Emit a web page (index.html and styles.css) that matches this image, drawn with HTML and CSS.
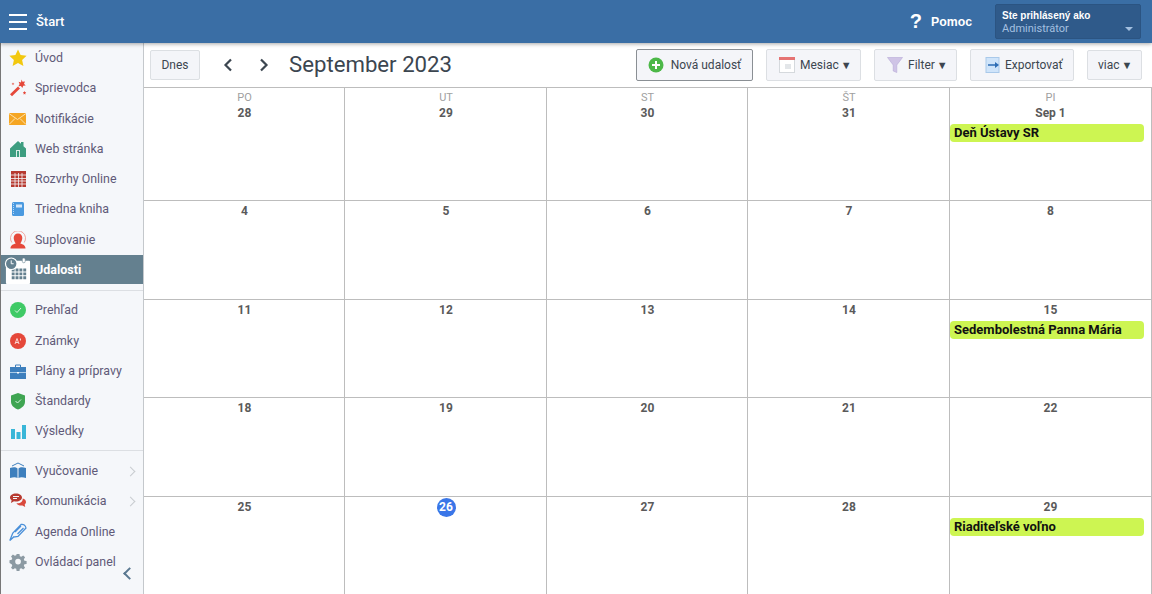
FILE: index.html
```html
<!DOCTYPE html>
<html lang="sk">
<head>
  <meta charset="UTF-8" />
  <title>Udalosti</title>
  <link rel="stylesheet" href="styles.css">
</head>
<body>

  <!-- Horny pruh -->
  <header class="topbar">
    <div class="hamburger"><span></span><span></span><span></span></div>
    <div class="top-title">Štart</div>
    <div class="help"><span class="help-mark">?</span><span>Pomoc</span></div>
    <div class="user-box">
      <div class="user-label">Ste prihlásený ako</div>
      <div class="user-name">Administrátor</div>
      <span class="user-arrow"></span>
    </div>
  </header>

  <div class="page">
    <!-- Bocne menu -->
    <nav class="sidebar">
      <a class="item"><svg viewBox="0 0 18 18"><path fill="#f2c80f" d="M9 .5l2.600 5.600 6 .7-4.500 4.100 1.300 6L9 13.900 3.600 16.900l1.300-6L.4 6.800l6-.7z"/></svg><span>Úvod</span></a>
      <a class="item"><svg viewBox="0 0 18 18"><path fill="#e5483a" d="M1 15.200L9 7.500l2 2-8 7.800zM12.500 .5l1 2.300 2.500-.4-1 2.300 1.700 1.800-2.500.2-.8 2.400-1.500-2-2.500.2 1.200-2.200-1-2.300 2.400.6zM15.500 12l.5 1.100 1.200.3-.9.9.2 1.200-1-.6-1 .6.2-1.200-.9-.9 1.200-.3zM4 3.500l.5 1 1 .4-1 .4-.5 1-.5-1-1-.4 1-.4z"/></svg><span>Sprievodca</span></a>
      <a class="item"><svg viewBox="0 0 18 18"><rect y="3" width="17" height="12" fill="#f5a623"/><path fill="none" stroke="#fde2ae" d="M0 3.500l8.500 6 8.500-6M0 14.500l6-6M17 14.500l-6-6"/></svg><span>Notifikácie</span></a>
      <a class="item"><svg viewBox="0 0 18 18"><path fill="#3d9d80" d="M1 8.500L9 1l3 2.800V2h2.500v4.200L17 8.500v8.500H1z"/><rect x="7" y="10" width="4" height="7" fill="#dcefe8"/><rect x="8" y="11" width="2" height="6" fill="#3d9d80"/></svg><span>Web stránka</span></a>
      <a class="item"><svg viewBox="0 0 18 18"><rect x="2" y="1" width="15" height="16" fill="#b73a30"/><path stroke="#f5f7fa" stroke-width=".8" d="M2 5h15M2 8.500h15M2 11h15M2 14h15M6 3v14M9.500 3v14M13 3v14"/></svg><span>Rozvrhy Online</span></a>
      <a class="item"><svg viewBox="0 0 18 18"><rect x="3" y="2" width="12" height="14" rx="1.500" fill="#4a9ae0"/><path stroke="#d5e8fa" stroke-width=".8" stroke-dasharray="1 1" d="M4.500 3v12"/><rect x="7" y="4.500" width="6" height="3" fill="#d5e8fa"/></svg><span>Triedna kniha</span></a>
      <a class="item"><svg viewBox="0 0 18 18"><path fill="none" stroke="#ee8f86" stroke-width=".8" d="M2.800 11.500a7.500 7.500 0 1 1 12.400 0"/><path fill="#e5483a" d="M9 2.500c2.700 0 4.300 2 4.300 4.500S11.700 12 11.300 12.500c2.500 1 5.200 1.500 5.200 5H1.500c0-3.500 2.700-4 5.200-5C6.300 12 4.700 9.500 4.700 7S6.300 2.500 9 2.500z"/></svg><span>Suplovanie</span></a>
      <a class="item item-active">
        <svg class="icon-big" viewBox="0 0 28 28">
          <rect x="2" y="4" width="25" height="24" rx="1" fill="#fff"/>
          <rect x="19" y="1" width="3" height="5" rx="1.500" fill="#fff" stroke="#64808f" stroke-width=".6"/>
          <path fill="#64808f" d="M8 12h3v3H8zM12 12h3v3h-3zM16 12h3v3h-3zM20 12h3v3h-3zM8 16h3v3H8zM12 16h3v3h-3zM16 16h3v3h-3zM20 16h3v3h-3zM8 20h3v3H8zM12 20h3v3h-3zM16 20h3v3h-3zM20 20h3v3h-3z"/>
          <circle cx="7.500" cy="7" r="6" fill="#64808f" stroke="#fff" stroke-width="1.200"/>
          <path fill="none" stroke="#fff" d="M7.500 3.500V7h2.500"/>
        </svg>
        <span>Udalosti</span>
      </a>
      <div class="divider divider-a"></div>
      <a class="item"><svg viewBox="0 0 18 18"><circle cx="9" cy="9" r="8" fill="#3fca66"/><path fill="none" stroke="#d8f5e0" d="M6 9.500l2 2 4-4.500"/></svg><span>Prehľad</span></a>
      <a class="item"><svg viewBox="0 0 18 18"><circle cx="9" cy="9" r="8" fill="#e5483a"/><path fill="none" stroke="#fbd5d1" d="M6 12l2-5.500 2 5.500M7 10.500h2M11.500 6.500v2"/></svg><span>Známky</span></a>
      <a class="item"><svg viewBox="0 0 18 18"><path fill="#3d7fbd" d="M1 5h16v12H1z"/><path fill="none" stroke="#3d7fbd" d="M6.500 5V3h5v2"/><path stroke="#a9cbe8" d="M1 10.500h16"/><rect x="8" y="10" width="2" height="1.500" fill="#fff"/></svg><span>Plány a prípravy</span></a>
      <a class="item"><svg viewBox="0 0 18 18"><path fill="#3fa552" d="M9 1l7 2.500v6c0 4-3 6.500-7 8-4-1.500-7-4-7-8v-6z"/><path fill="none" stroke="#d8f5e0" d="M6.500 9l2 2 3.500-3.500"/></svg><span>Štandardy</span></a>
      <a class="item"><svg viewBox="0 0 18 18"><path fill="#38b6d8" d="M2 7h4v10H2zM7.500 10h4v7h-4zM13 3h4v14h-4z"/></svg><span>Výsledky</span></a>
      <div class="divider divider-b"></div>
      <a class="item"><svg viewBox="0 0 18 18"><path fill="#3d7fbd" d="M1 6c3-1 6-1 7.500.5V16C7 15 4 15 1 16zM17 6c-3-1-6-1-7.500.5V16c1.500-1 4.500-1 7.500 0z"/><path fill="none" stroke="#3d7fbd" d="M3 4l6-3 6 3"/></svg><span>Vyučovanie</span><i class="chevron"></i></a>
      <a class="item"><svg viewBox="0 0 18 18"><path fill="#b73a30" d="M7 1.500c3.500 0 6 1.700 6 4s-2.500 4-6 4c-.7 0-1.300 0-2-.2L2 11l.6-2.800C1.500 7.500 1 6.500 1 5.500c0-2.300 2.500-4 6-4z"/><path fill="#d9493c" d="M13.700 6.500c2 .5 3.300 1.800 3.300 3.500 0 1-.5 1.800-1.300 2.400l.5 2.600-2.800-1.500c-2.500.4-5-.5-6-2.300 4 .5 6.500-1.700 6.300-4.700z"/><path stroke="#f5f7fa" d="M4 4.500h6M4 6.500h4"/></svg><span>Komunikácia</span><i class="chevron"></i></a>
      <a class="item"><svg viewBox="0 0 18 18"><path fill="none" stroke="#4a90d9" stroke-width="1.300" d="M.8 17.500l3-7.500L12 1.500c2.500-.5 4.500.8 5 3.500l-8 8.500-4.500.5zM6 9l6-6M8.500 11l6-6M.8 17.500l4.500-4"/></svg><span>Agenda Online</span></a>
      <a class="item"><svg viewBox="0 0 18 18"><path fill="#8c9aa3" fill-rule="evenodd" d="M7.500 1h3l.4 2.300 1.500.6 2-1.300 2 2-1.300 2 .6 1.500 2.300.4v3l-2.300.4-.6 1.500 1.300 2-2 2-2-1.300-1.500.6-.4 2.300h-3l-.4-2.300-1.500-.6-2 1.300-2-2 1.300-2-.6-1.500L0 10.500v-3l2.300-.4.6-1.500-1.300-2 2-2 2 1.300 1.500-.6zM9 6a3 3 0 100 6 3 3 0 000-6z" transform="translate(.5 0) scale(.95)"/></svg><span>Ovládací panel</span></a>
      <div class="collapse"><i></i></div>
    </nav>

    <!-- Kalendar -->
    <main class="main">
      <div class="toolbar">
        <button class="btn btn-today">Dnes</button>
        <div class="arrows">
          <svg viewBox="0 0 12 14"><path fill="none" stroke="#3c4650" stroke-width="2.200" d="M9 1.500L3.500 7 9 12.500"/></svg>
          <svg viewBox="0 0 12 14"><path fill="none" stroke="#3c4650" stroke-width="2.200" d="M3 1.500L8.500 7 3 12.500"/></svg>
        </div>
        <h1>September 2023</h1>
        <div class="tools">
          <button class="btn btn-new">
            <svg viewBox="0 0 16 16"><circle cx="8" cy="8" r="7.500" fill="#4cb848"/><path stroke="#fff" stroke-width="2" d="M8 4v8M4 8h8"/></svg>
            Nová udalosť
          </button>
          <button class="btn btn-month">
            <svg viewBox="0 0 16 16"><rect x=".5" y=".5" width="15" height="15" fill="#fff" stroke="#d5d9dd"/><rect width="16" height="3" fill="#e57373"/><path fill="#e3e6e9" d="M6 7h6v5H6z"/></svg>
            <span>Mesiac <span class="caret">▼</span></span>
          </button>
          <button class="btn btn-filter">
            <svg viewBox="0 0 16 16"><path fill="#cfc4e6" stroke="#b7a9d6" stroke-width=".6" d="M.5 .5h15L9.800 8v7.500L6.200 14V8z"/></svg>
            <span>Filter <span class="caret">▼</span></span>
          </button>
          <button class="btn btn-export">
            <svg viewBox="0 0 16 16"><rect x="1" y=".5" width="13" height="15" fill="#cfe4fa" stroke="#a9c9ea"/><path stroke="#2d6db5" stroke-width="1.500" d="M3 8h9"/><path fill="#2d6db5" d="M10 5l4 3-4 3z"/></svg>
            Exportovať
          </button>
          <button class="btn btn-more"><span>viac <span class="caret">▼</span></span></button>
        </div>
      </div>

      <div class="calendar">
        <div class="cell first"><div class="dow">PO</div><div class="num">28</div></div>
        <div class="cell first"><div class="dow">UT</div><div class="num">29</div></div>
        <div class="cell first"><div class="dow">ST</div><div class="num">30</div></div>
        <div class="cell first"><div class="dow">ŠT</div><div class="num">31</div></div>
        <div class="cell first"><div class="dow">PI</div><div class="num">Sep 1</div><div class="event">Deň Ústavy SR</div></div>

        <div class="cell"><div class="num">4</div></div>
        <div class="cell"><div class="num">5</div></div>
        <div class="cell"><div class="num">6</div></div>
        <div class="cell"><div class="num">7</div></div>
        <div class="cell"><div class="num">8</div></div>

        <div class="cell"><div class="num">11</div></div>
        <div class="cell"><div class="num">12</div></div>
        <div class="cell"><div class="num">13</div></div>
        <div class="cell"><div class="num">14</div></div>
        <div class="cell"><div class="num">15</div><div class="event">Sedembolestná Panna Mária</div></div>

        <div class="cell"><div class="num">18</div></div>
        <div class="cell"><div class="num">19</div></div>
        <div class="cell"><div class="num">20</div></div>
        <div class="cell"><div class="num">21</div></div>
        <div class="cell"><div class="num">22</div></div>

        <div class="cell"><div class="num">25</div></div>
        <div class="cell"><div class="num"><span class="today">26</span></div></div>
        <div class="cell"><div class="num">27</div></div>
        <div class="cell"><div class="num">28</div></div>
        <div class="cell"><div class="num">29</div><div class="event">Riaditeľské voľno</div></div>
      </div>
    </main>
  </div>

</body>
</html>
```

FILE: styles.css
```css
/* Zaklad */
* { box-sizing: border-box; margin: 0; padding: 0; }
html, body { height: 100%; overflow: hidden; }
body {
  font-family: Roboto, "Liberation Sans", sans-serif;
  font-size: 12px;
  color: #3c4650;
  background: #fff;
}

/* Horny pruh */
.topbar {
  position: relative;
  z-index: 2;
  display: flex;
  align-items: center;
  height: 43px;
  background: #3a6ea5;
  color: #fff;
  box-shadow: 0 1px 4px rgba(0,0,0,0.35);
}
.hamburger {
  display: flex;
  flex-direction: column;
  gap: 5px;
  width: 18px;
  margin-left: 9px;
}
.hamburger span {
  height: 2px;
  background: #fff;
}
.top-title {
  margin-left: 9px;
  font-size: 13px;
  font-weight: 500;
}
.help {
  display: flex;
  align-items: center;
  gap: 9px;
  margin-left: auto;
  font-family: "Liberation Sans", sans-serif;
  font-size: 12.300px;
  font-weight: 700;
}
.help-mark {
  font-size: 20px;
  font-weight: 700;
}
.user-box {
  position: relative;
  width: 146px;
  height: 35px;
  margin: 0 11px 0 23px;
  padding: 4px 6px;
  background: #2f5a8a;
  border: 1px solid #2b5482;
  border-radius: 2px;
}
.user-label {
  font-family: "Liberation Sans", sans-serif;
  font-size: 10px;
  font-weight: 700;
  line-height: 13px;
}
.user-name {
  font-size: 11px;
  line-height: 14px;
  color: #a4c0e0;
}
.user-arrow {
  position: absolute;
  right: 7px;
  bottom: 7px;
  border-left: 4px solid transparent;
  border-right: 4px solid transparent;
  border-top: 4px solid #a4c0e0;
}

.page {
  display: flex;
  height: 551px;
}

/* Bocne menu */
.sidebar {
  position: relative;
  flex: 0 0 144px;
  background: #f5f7fa;
  border-left: 1px solid #777;
  border-right: 1px solid #c4c8cc;
}
.item {
  display: flex;
  align-items: center;
  height: 30.250px;
  padding-left: 8px;
  color: #5f5a78;
  font-size: 12.400px;
  line-height: 14px;
}
.item svg {
  flex: 0 0 18px;
  width: 18px;
  height: 18px;
  margin-right: 8px;
}
.item-active {
  height: 29px;
  padding: 2px 0 0 3px;
  background: #64808f;
  color: #fff;
  font-weight: 700;
  font-size: 12.500px;
}
.item-active svg.icon-big {
  flex: 0 0 27px;
  width: 27px;
  height: 27px;
  margin-right: 4px;
}
.divider {
  border-top: 1px solid #dcdfe3;
}
.divider-a { margin: 6px 0 4.500px; }
.divider-b { margin: 3.500px 0 5px; }
.chevron {
  width: 7px;
  height: 7px;
  margin-left: auto;
  margin-right: 9px;
  border-top: 1px solid #c8ccd0;
  border-right: 1px solid #c8ccd0;
  transform: rotate(45deg);
}
.collapse {
  position: absolute;
  right: 9px;
  bottom: 16px;
}
.collapse i {
  display: block;
  width: 9px;
  height: 9px;
  border-left: 2px solid #5a7890;
  border-bottom: 2px solid #5a7890;
  transform: rotate(45deg);
}

/* Kalendar */
.main {
  flex: 1;
  min-width: 0;
}
.toolbar {
  display: flex;
  align-items: center;
  height: 44px;
  padding: 0 10px 0 6px;
}
.btn {
  display: inline-flex;
  align-items: center;
  justify-content: center;
  gap: 5px;
  height: 32px;
  background: #f4f5f9;
  border: 1px solid #dcdfe3;
  border-radius: 2px;
  font-family: Roboto, "Liberation Sans", sans-serif;
  font-size: 12px;
  color: #3c4650;
}
.btn svg {
  width: 16px;
  height: 16px;
}
.caret {
  margin-left: -1px;
  font-size: 11px;
}
.btn-today { width: 50px; height: 30px; }
.arrows {
  display: flex;
  gap: 24px;
  margin-left: 22px;
}
.arrows svg {
  width: 12px;
  height: 14px;
}
h1 {
  margin: -2px 0 0 19px;
  font-size: 22.200px;
  font-weight: 400;
  color: #3c4650;
}
.tools {
  display: flex;
  align-items: center;
  margin-left: auto;
}
.btn-new { width: 117px; border-color: #8a8f94; gap: 7px; }
.btn-month { width: 95px; margin-left: 13px; justify-content: flex-start; padding-left: 12px; }
.btn-filter { width: 83px; margin-left: 13px; justify-content: flex-start; padding-left: 12px; }
.btn-export { width: 104px; margin-left: 13px; justify-content: flex-start; padding-left: 14px; gap: 4px; }
.btn-more { width: 55px; height: 30px; margin-left: 13px; justify-content: flex-start; padding-left: 10px; }

.calendar {
  display: grid;
  grid-template-columns: 201px 202px 201px 202px 202px;
  grid-template-rows: 113px repeat(4, 98.500px);
  border-top: 1px solid #bdbdbd;
}
.cell {
  min-width: 0;
  padding-top: 2px;
  padding-left: 1px;
  border-right: 1px solid #bdbdbd;
  border-bottom: 1px solid #bdbdbd;
  text-align: center;
}
.cell:nth-child(5n) {
  padding-left: 0;
}
.dow {
  font-size: 11px;
  line-height: 15px;
  color: #a0a0a0;
}
.num {
  font-size: 12px;
  font-weight: 700;
  line-height: 17px;
  color: #5a5a5a;
}
.today {
  display: inline-block;
  width: 19px;
  height: 19px;
  margin-top: -1px;
  border-radius: 50%;
  background: #3a76e8;
  color: #fff;
  line-height: 19px;
}
.event {
  height: 18px;
  margin: 2px 7px 0 0;
  padding-left: 4px;
  background: #cdf552;
  border-radius: 4px;
  color: #111;
  font-size: 13px;
  font-weight: 700;
  line-height: 18px;
  text-align: left;
}
```
